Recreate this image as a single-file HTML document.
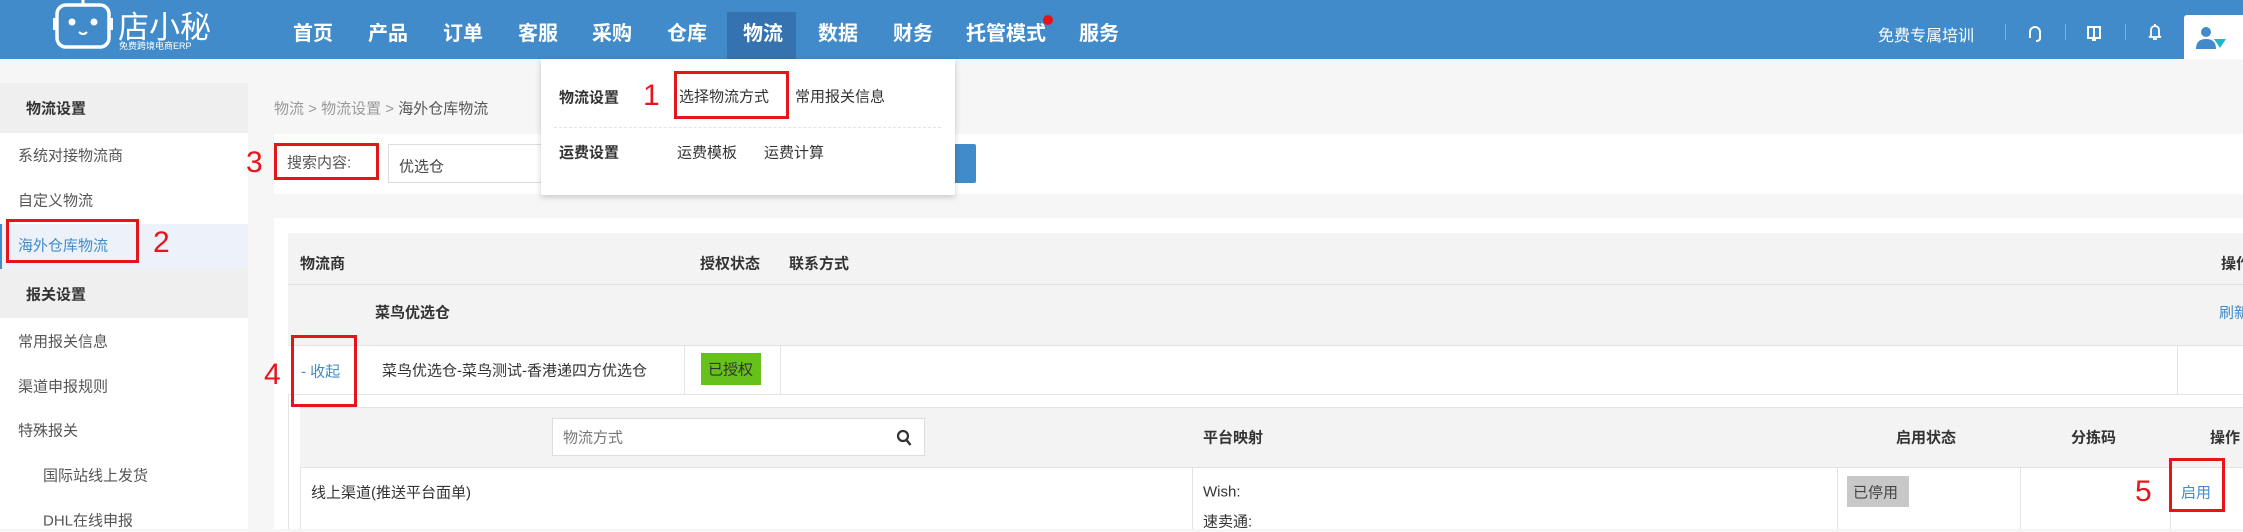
<!DOCTYPE html>
<html><head><meta charset="utf-8"><style>
*{margin:0;padding:0;box-sizing:border-box}
body{width:2243px;height:529px;overflow:hidden;background:#f6f6f6;font-family:"Liberation Sans","Noto Sans CJK SC",sans-serif;color:#333;position:relative;font-size:15px}
.a{position:absolute;white-space:nowrap}
.nav{position:absolute;left:0;top:0;width:2243px;height:59px;background:#418bca}
.ni{position:absolute;top:0;height:59px;line-height:68px;color:#fff;font-size:20px;font-weight:bold}
.red{color:#e8141c;font-size:30px}
.rb{position:absolute;border:3px solid #e8141c}
.blue{color:#418bca}
.v{transform:translateY(-50%)}
</style></head><body>
<div class="nav"></div>
<svg class="a" style="left:52px;top:0" width="62" height="50" viewBox="0 0 62 50"><line x1="31" y1="0" x2="31" y2="5" stroke="#fff" stroke-width="3"/><rect x="5" y="5" width="52" height="42" rx="9" fill="none" stroke="#fff" stroke-width="3.5"/><rect x="1" y="18" width="4" height="12" fill="#fff"/><rect x="57" y="18" width="4" height="12" fill="#fff"/><circle cx="20" cy="22" r="3.5" fill="#fff"/><circle cx="42" cy="22" r="3.5" fill="#fff"/><path d="M27 32 Q31 36 35 32" stroke="#fff" stroke-width="2" fill="none"/></svg>
<div class="a" style="left:118px;top:2px;color:#fff;font-size:31px;">店小秘</div>
<div class="a" style="left:119px;top:39px;color:#fff;font-size:9px;">免费跨境电商ERP</div>
<div class="a" style="left:727px;top:12px;width:69px;height:47px;background:#3473b0"></div>
<div class="ni" style="left:293px">首页</div><div class="ni" style="left:368px">产品</div><div class="ni" style="left:443px">订单</div><div class="ni" style="left:518px">客服</div><div class="ni" style="left:592px">采购</div><div class="ni" style="left:667px">仓库</div><div class="ni" style="left:743px">物流</div><div class="ni" style="left:818px">数据</div><div class="ni" style="left:893px">财务</div><div class="ni" style="left:966px">托管模式</div><div class="ni" style="left:1079px">服务</div>
<div class="a" style="left:1043px;top:15px;width:10px;height:10px;border-radius:50%;background:#e8141c"></div>
<div class="a" style="left:1878px;top:22px;color:#fff;font-size:16px">免费专属培训</div>
<div class="a" style="left:2005px;top:24px;width:1px;height:16px;background:#7fb0dc"></div>
<div class="a" style="left:2065px;top:24px;width:1px;height:16px;background:#7fb0dc"></div>
<div class="a" style="left:2125px;top:24px;width:1px;height:16px;background:#7fb0dc"></div>
<svg class="a" style="left:2027px;top:24px" width="16" height="18" viewBox="0 0 16 18"><path d="M3 12V8a5 5 0 0 1 10 0v4M3 10v4M13 10v4M13 14q0 3-4 3" stroke="#fff" stroke-width="2" fill="none"/></svg>
<svg class="a" style="left:2086px;top:25px" width="16" height="16" viewBox="0 0 16 16"><path d="M2 2h12v11H2zM8 2v11M6 15h4" stroke="#fff" stroke-width="2" fill="none"/></svg>
<svg class="a" style="left:2148px;top:23px" width="14" height="18" viewBox="0 0 14 18"><path d="M3 13V7a4 4 0 0 1 8 0v6l2 1H1zM7 1v2M5 16h4" stroke="#fff" stroke-width="1.8" fill="none"/></svg>
<div class="a" style="left:2184px;top:15px;width:59px;height:44px;background:#fff;border-radius:3px 0 0 0"></div>
<svg class="a" style="left:2196px;top:25px" width="36" height="28" viewBox="0 0 36 28"><circle cx="10" cy="7" r="5" fill="#418bca"/><path d="M0 24q0-10 10-10t10 10z" fill="#418bca"/><path d="M18 14h12l-6 9z" fill="#1fb8c8"/></svg>

<div class="a" style="left:0;top:83px;width:248px;height:446px;background:#fff"></div>
<div class="a" style="left:0;top:83px;width:248px;height:50px;background:#efefef"></div>
<div class="a" style="left:26px;top:108px;font-weight:bold;transform:translateY(-50%);font-size:15px">物流设置</div>
<div class="a v" style="left:18px;top:155px;color:#555">系统对接物流商</div>
<div class="a v" style="left:18px;top:200px;color:#555">自定义物流</div>
<div class="a" style="left:0;top:224px;width:248px;height:45px;background:#edf2fa"></div>
<div class="a" style="left:0;top:224px;width:2px;height:45px;background:#418bca"></div>
<div class="a v blue" style="left:18px;top:245px">海外仓库物流</div>
<div class="rb" style="left:6px;top:219px;width:133px;height:44px"></div>
<div class="a v red" style="left:153px;top:243px">2</div>
<div class="a" style="left:0;top:269px;width:248px;height:49px;background:#efefef"></div>
<div class="a v" style="left:26px;top:294px;font-weight:bold">报关设置</div>
<div class="a v" style="left:18px;top:341px;color:#555">常用报关信息</div>
<div class="a v" style="left:18px;top:386px;color:#555">渠道申报规则</div>
<div class="a v" style="left:18px;top:430px;color:#555">特殊报关</div>
<div class="a v" style="left:43px;top:475px;color:#555">国际站线上发货</div>
<div class="a v" style="left:43px;top:520px;color:#555">DHL在线申报</div>

<div class="a v" style="left:274px;top:108px;color:#999;font-size:15px">物流 &gt; 物流设置 &gt; <span style="color:#555">海外仓库物流</span></div>
<div class="a" style="left:274px;top:134px;width:1969px;height:60px;background:#fff"></div>
<div class="rb" style="left:274px;top:143px;width:105px;height:37px"></div>
<div class="a v" style="left:287px;top:162px;color:#555">搜索内容:</div>
<div class="a v red" style="left:246px;top:163px">3</div>
<div class="a" style="left:388px;top:144px;width:300px;height:39px;border:1px solid #ddd;background:#fff"></div>
<div class="a v" style="left:399px;top:166px;color:#444">优选仓</div>
<div class="a" style="left:940px;top:144px;width:36px;height:39px;background:#418bca;border-radius:2px"></div>

<div class="a" style="left:274px;top:218px;width:1969px;height:311px;background:#fff"></div>
<div class="a" style="left:288px;top:233px;width:1955px;height:52px;background:#f3f3f3;border-bottom:1px solid #e3e3e3"></div>
<div class="a v" style="left:300px;top:263px;font-weight:bold">物流商</div>
<div class="a v" style="left:700px;top:263px;font-weight:bold">授权状态</div>
<div class="a v" style="left:789px;top:263px;font-weight:bold">联系方式</div>
<div class="a v" style="left:2221px;top:263px;font-weight:bold">操作</div>
<div class="a" style="left:288px;top:285px;width:1955px;height:61px;background:#f3f3f3;border-bottom:1px solid #e3e3e3"></div>
<div class="a v" style="left:375px;top:312px;font-weight:bold">菜鸟优选仓</div>
<div class="a v blue" style="left:2219px;top:312px">刷新</div>
<div class="a" style="left:288px;top:346px;width:1955px;height:49px;background:#fff;border-bottom:1px solid #e3e3e3"></div>
<div class="a" style="left:684px;top:346px;width:1px;height:49px;background:#e3e3e3"></div>
<div class="a" style="left:780px;top:346px;width:1px;height:49px;background:#e3e3e3"></div>
<div class="a" style="left:2177px;top:346px;width:1px;height:49px;background:#e3e3e3"></div>
<div class="a v blue" style="left:301px;top:371px">- 收起</div>
<div class="a v" style="left:382px;top:370px">菜鸟优选仓-菜鸟测试-香港递四方优选仓</div>
<div class="a" style="left:701px;top:353px;width:60px;height:32px;background:#66c21a"></div>
<div class="a v" style="left:708px;top:369px;color:#333">已授权</div>
<div class="rb" style="left:291px;top:335px;width:66px;height:72px"></div>
<div class="a v red" style="left:264px;top:375px">4</div>
<div class="a" style="left:288px;top:395px;width:1px;height:134px;background:#e3e3e3"></div>
<div class="a" style="left:300px;top:407px;width:1943px;height:61px;background:#f3f3f3;border-top:1px solid #e3e3e3;border-bottom:1px solid #e3e3e3"></div>
<div class="a" style="left:552px;top:418px;width:373px;height:38px;background:#fff;border:1px solid #ddd"></div>
<div class="a v" style="left:563px;top:437px;color:#777">物流方式</div>
<svg class="a" style="left:896px;top:429px" width="16" height="18" viewBox="0 0 16 18"><circle cx="7" cy="7" r="5" stroke="#333" stroke-width="2.2" fill="none"/><path d="M10.5 11l4 5" stroke="#333" stroke-width="2.4"/></svg>
<div class="a v" style="left:1203px;top:437px;font-weight:bold">平台映射</div>
<div class="a v" style="left:1896px;top:437px;font-weight:bold">启用状态</div>
<div class="a v" style="left:2071px;top:437px;font-weight:bold">分拣码</div>
<div class="a v" style="left:2210px;top:437px;font-weight:bold">操作</div>
<div class="a" style="left:300px;top:468px;width:1px;height:61px;background:#e3e3e3"></div>
<div class="a" style="left:1192px;top:468px;width:1px;height:61px;background:#e3e3e3"></div>
<div class="a" style="left:1837px;top:468px;width:1px;height:61px;background:#e3e3e3"></div>
<div class="a" style="left:2020px;top:468px;width:1px;height:61px;background:#e3e3e3"></div>
<div class="a" style="left:2170px;top:468px;width:1px;height:61px;background:#e3e3e3"></div>
<div class="a v" style="left:311px;top:492px">线上渠道(推送平台面单)</div>
<div class="a v" style="left:1203px;top:492px">Wish:</div>
<div class="a v" style="left:1203px;top:521px">速卖通:</div>
<div class="a" style="left:1847px;top:476px;width:62px;height:31px;background:#c8c8c8"></div>
<div class="a v" style="left:1853px;top:492px;color:#444">已停用</div>
<div class="a v red" style="left:2135px;top:492px">5</div>
<div class="rb" style="left:2169px;top:458px;width:56px;height:54px"></div>
<div class="a v blue" style="left:2181px;top:492px">启用</div>

<div class="a" style="left:541px;top:59px;width:414px;height:136px;background:#fff;box-shadow:0 2px 6px rgba(0,0,0,.2)"></div>
<div class="a v" style="left:559px;top:97px;font-weight:bold">物流设置</div>
<div class="a v red" style="left:643px;top:96px">1</div>
<div class="rb" style="left:674px;top:71px;width:115px;height:48px"></div>
<div class="a v" style="left:679px;top:96px">选择物流方式</div>
<div class="a v" style="left:795px;top:96px">常用报关信息</div>
<div class="a" style="left:554px;top:127px;width:387px;border-top:1px dashed #e3e3e3"></div>
<div class="a v" style="left:559px;top:152px;font-weight:bold">运费设置</div>
<div class="a v" style="left:677px;top:152px">运费模板</div>
<div class="a v" style="left:764px;top:152px">运费计算</div>
</body></html>
